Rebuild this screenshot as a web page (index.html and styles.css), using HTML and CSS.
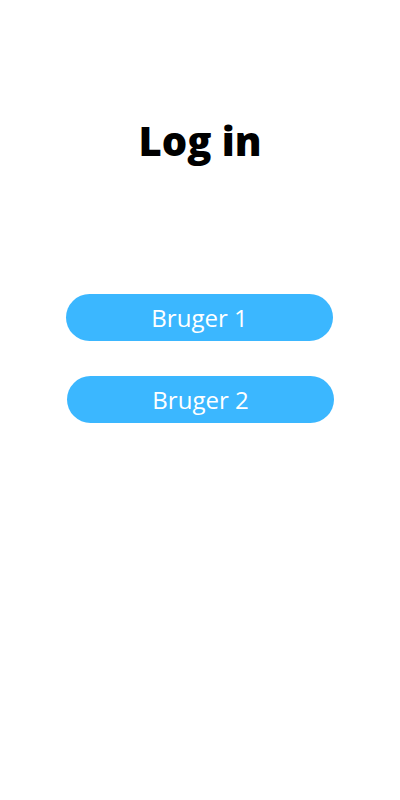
FILE: index.html
```html
<!DOCTYPE html>
<html lang="da">
<head>
<meta charset="utf-8">
<title>Log in</title>
<link rel="stylesheet" href="styles.css">
</head>
<body>
<main class="login">
  <h1 class="login__title">Log in</h1>
  <div class="login__users">
    <button class="user-btn" type="button">Bruger 1</button>
    <button class="user-btn user-btn--second" type="button">Bruger 2</button>
  </div>
</main>
</body>
</html>
```
FILE: styles.css
```css
* { box-sizing: border-box; }
html, body {
  margin: 0;
  padding: 0;
  background: #ffffff;
}
body {
  font-family: "Open Sans", "Noto Sans", sans-serif;
  width: 400px;
  height: 800px;
}
.login {
  display: flex;
  flex-direction: column;
  align-items: center;
  padding-top: 113px;
}
.login__title {
  margin: 0;
  height: 55px;
  font-size: 40px;
  font-weight: 800;
  line-height: 55px;
  color: #000000;
}
.login__users {
  display: flex;
  flex-direction: column;
  align-items: center;
  gap: 35px;
  margin-top: 126px;
  margin-right: 1px;
}
.user-btn {
  width: 267px;
  height: 47px;
  border: none;
  border-radius: 24px;
  background: #3bb7ff;
  color: #ffffff;
  font-family: "Open Sans", "Noto Sans", sans-serif;
  font-size: 24px;
  font-weight: 400;
  padding: 0;
  cursor: pointer;
}
.user-btn--second {
  margin-left: 2px;
}
```
